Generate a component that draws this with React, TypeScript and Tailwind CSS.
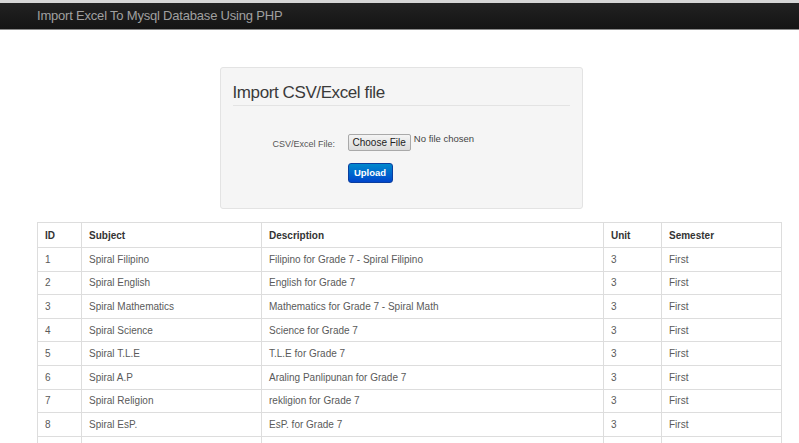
const rows = [
  ["1", "Spiral Filipino", "Filipino for Grade 7 - Spiral Filipino", "3", "First"],
  ["2", "Spiral English", "English for Grade 7", "3", "First"],
  ["3", "Spiral Mathematics", "Mathematics for Grade 7 - Spiral Math", "3", "First"],
  ["4", "Spiral Science", "Science for Grade 7", "3", "First"],
  ["5", "Spiral T.L.E", "T.L.E for Grade 7", "3", "First"],
  ["6", "Spiral A.P", "Araling Panlipunan for Grade 7", "3", "First"],
  ["7", "Spiral Religion", "rekligion for Grade 7", "3", "First"],
  ["8", "Spiral EsP.", "EsP. for Grade 7", "3", "First"],
];

export default function App() {
  return (
    <div className="w-[799px] h-[443px] overflow-hidden bg-white font-['Liberation_Sans',Arial,sans-serif]">
      {/* navbar */}
      <div className="border-t-[3px] border-[#d6d6d6] border-b border-b-[#8a8a8a] bg-gradient-to-b from-[#222] to-[#141414] h-[30px] flex items-center pl-[37px]">
        <span className="text-[13px] text-[#a0a0a0] tracking-[-0.2px]">Import Excel To Mysql Database Using PHP</span>
      </div>

      {/* import panel */}
      <div className="flex justify-center pt-[37px] pl-[3px]">
        <div className="w-[363px] h-[142px] bg-[#f5f5f5] border border-[#e3e3e3] rounded-[3px] px-[12px] pt-[15px]">
          <h2 className="text-[17px] text-[#3a3a3a] leading-[20px] tracking-[-0.4px] pb-[2px] border-b border-[#e3e3e3]">
            Import CSV/Excel file
          </h2>
          <div className="flex items-start mt-[28px] pl-[40px]">
            <label className="text-[9px] text-[#555] w-[75px] pt-[4px]">CSV/Excel File:</label>
            <button className="text-[10px] text-[#222] bg-gradient-to-b from-[#f4f4f4] to-[#dcdcdc] border border-[#a9a9a9] rounded-[2px] px-[4px] h-[17px] leading-[15px]">
              Choose File
            </button>
            <span className="text-[9.5px] text-[#444] ml-[3px] -mt-[2px]">No file chosen</span>
          </div>
          <div className="pl-[115px] mt-[7px]">
            <button className="text-[9.5px] font-bold text-white bg-gradient-to-b from-[#0088cc] to-[#0044cc] border border-[#0a3e9e] rounded-[3px] w-[45px] h-[20px]">
              Upload
            </button>
          </div>
        </div>
      </div>

      {/* table */}
      <div className="pl-[37px] pr-[17px] mt-[13px]">
        <table className="w-full border-collapse text-[10px] text-[#5a5a5a]">
          <thead>
            <tr className="h-[25px]">
              <th className="w-[44px] border border-[#ddd] text-left font-bold pl-[7px] text-[#333]">ID</th>
              <th className="w-[180px] border border-[#ddd] text-left font-bold pl-[7px] text-[#333]">Subject</th>
              <th className="w-[342px] border border-[#ddd] text-left font-bold pl-[7px] text-[#333]">Description</th>
              <th className="w-[58px] border border-[#ddd] text-left font-bold pl-[7px] text-[#333]">Unit</th>
              <th className="border border-[#ddd] text-left font-bold pl-[7px] text-[#333]">Semester</th>
            </tr>
          </thead>
          <tbody>
            {rows.map((r) => (
              <tr key={r[0]} className="h-[23.6px]">
                {r.map((c, i) => (
                  <td key={i} className="border border-[#ddd] pl-[7px]">{c}</td>
                ))}
              </tr>
            ))}
            <tr className="h-[23.6px]">
              <td className="border border-[#ddd]"></td>
              <td className="border border-[#ddd]"></td>
              <td className="border border-[#ddd]"></td>
              <td className="border border-[#ddd]"></td>
              <td className="border border-[#ddd]"></td>
            </tr>
          </tbody>
        </table>
      </div>
    </div>
  );
}
